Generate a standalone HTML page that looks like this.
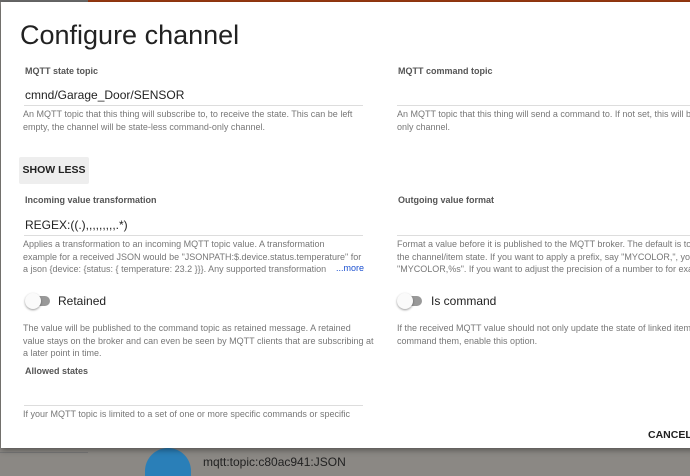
<!DOCTYPE html>
<html style="width:690px;height:476px;overflow:hidden"><head><style>
*{margin:0;padding:0;box-sizing:border-box}
body{width:690px;height:476px;overflow:hidden;background:#8b8884;font-family:"Liberation Sans",sans-serif;position:relative}
.top1{position:absolute;left:0;top:0;width:88px;height:2px;background:#6b6b6b}
.top2{position:absolute;left:88px;top:0;width:602px;height:2px;background:#9a3a10}
.dlg{position:absolute;left:1px;top:2px;width:700px;height:446px;background:#fff;box-shadow:0 2px 6px rgba(0,0,0,.4);overflow:hidden}
.a{position:absolute;white-space:nowrap}
.lab{font-size:9px;font-weight:bold;color:#555}
.val{font-size:12px;color:#222}
.line{position:absolute;height:1px;background:#ddd}
.help{position:absolute;font-size:9px;color:#777;line-height:12.5px;white-space:nowrap}
.tg{position:absolute;width:22px;height:10px;border-radius:5px;background:#999}
.tg:before{content:"";position:absolute;left:-3px;top:-3px;width:16px;height:16px;border-radius:50%;background:#fafafa;box-shadow:0 1px 2px rgba(0,0,0,.4)}
</style></head><body>
<div class="top1"></div><div class="top2"></div>
<div class="a" style="left:145px;top:448px;width:46px;height:28px;border-radius:23px 23px 0 0;background:#2a7fb8"></div>
<div class="a" style="left:203px;top:455px;font-size:12px;color:#222">mqtt:topic:c80ac941:JSON</div>
<div class="a" style="left:0;top:452px;width:88px;height:1px;background:#777"></div>
<div class="dlg">
<div class="a" style="left:19px;top:18px;font-size:27px;color:#222">Configure channel</div>
<div class="a lab" style="left:24px;top:64px">MQTT state topic</div>
<div class="a val" style="left:24px;top:86px">cmnd/Garage_Door/SENSOR</div>
<div class="line" style="left:23px;top:103px;width:339px"></div>
<div class="help" style="left:22px;top:106px">An MQTT topic that this thing will subscribe to, to receive the state. This can be left<br>empty, the channel will be state-less command-only channel.</div>
<div class="a lab" style="left:397px;top:64px">MQTT command topic</div>
<div class="line" style="left:396px;top:103px;width:300px"></div>
<div class="help" style="left:396px;top:106px">An MQTT topic that this thing will send a command to. If not set, this will be a state-<br>only channel.</div>
<div class="a" style="left:18px;top:155px;width:70px;height:27px;background:#eee;border-radius:2px;font-size:10.5px;font-weight:bold;color:#222;text-align:center;line-height:27px">SHOW LESS</div>
<div class="a lab" style="left:24px;top:193px">Incoming value transformation</div>
<div class="a val" style="left:24px;top:216px">REGEX:((.),,,,,,,,,.*)</div>
<div class="line" style="left:23px;top:233px;width:339px"></div>
<div class="help" style="left:22px;top:236px">Applies a transformation to an incoming MQTT topic value. A transformation<br>example for a received JSON would be "JSONPATH:$.device.status.temperature" for<br>a json {device: {status: { temperature: 23.2 }}}. Any supported transformation</div>
<div class="a" style="left:331px;top:261px;font-size:9px;color:#1a4fd0;background:#fff;padding-left:4px">...more</div>
<div class="a lab" style="left:397px;top:193px">Outgoing value format</div>
<div class="line" style="left:396px;top:233px;width:300px"></div>
<div class="help" style="left:396px;top:236px">Format a value before it is published to the MQTT broker. The default is to just pass<br>the channel/item state. If you want to apply a prefix, say "MYCOLOR,", you would use<br>"MYCOLOR,%s". If you want to adjust the precision of a number to for example</div>
<div class="tg" style="left:27px;top:294px"></div>
<div class="a" style="left:57px;top:292px;font-size:12px;color:#222">Retained</div>
<div class="tg" style="left:399px;top:294px"></div>
<div class="a" style="left:430px;top:292px;font-size:12px;color:#222">Is command</div>
<div class="help" style="left:22px;top:320px">The value will be published to the command topic as retained message. A retained<br>value stays on the broker and can even be seen by MQTT clients that are subscribing at<br>a later point in time.</div>
<div class="help" style="left:396px;top:320px">If the received MQTT value should not only update the state of linked items, but<br>command them, enable this option.</div>
<div class="a lab" style="left:24px;top:364px">Allowed states</div>
<div class="line" style="left:23px;top:403px;width:339px"></div>
<div class="help" style="left:22px;top:406px">If your MQTT topic is limited to a set of one or more specific commands or specific</div>
<div class="a" style="left:647px;top:427px;font-size:10.5px;font-weight:bold;color:#222">CANCEL</div>
</div>
</body></html>
